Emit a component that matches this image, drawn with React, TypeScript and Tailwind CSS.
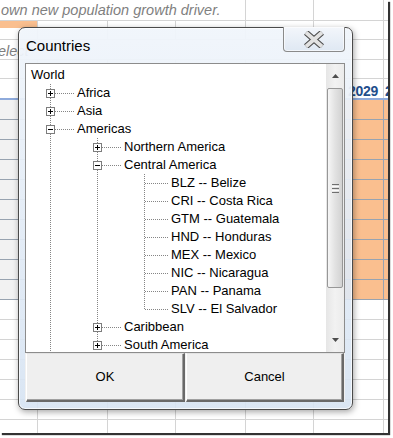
import React from 'react';

type Row = {
  label: string;
  level: number;
  box?: '+' | '-';
  next?: boolean;
  guides?: boolean[];
};

const rows: Row[] = [
  { label: 'World', level: 0 },
  { label: 'Africa', level: 1, box: '+', next: true, guides: [] },
  { label: 'Asia', level: 1, box: '+', next: true, guides: [] },
  { label: 'Americas', level: 1, box: '-', next: true, guides: [] },
  { label: 'Northern America', level: 2, box: '+', next: true, guides: [true] },
  { label: 'Central America', level: 2, box: '-', next: true, guides: [true] },
  { label: 'BLZ -- Belize', level: 3, next: true, guides: [true, true] },
  { label: 'CRI -- Costa Rica', level: 3, next: true, guides: [true, true] },
  { label: 'GTM -- Guatemala', level: 3, next: true, guides: [true, true] },
  { label: 'HND -- Honduras', level: 3, next: true, guides: [true, true] },
  { label: 'MEX -- Mexico', level: 3, next: true, guides: [true, true] },
  { label: 'NIC -- Nicaragua', level: 3, next: true, guides: [true, true] },
  { label: 'PAN -- Panama', level: 3, next: true, guides: [true, true] },
  { label: 'SLV -- El Salvador', level: 3, next: false, guides: [true, true] },
  { label: 'Caribbean', level: 2, box: '+', next: true, guides: [true] },
  { label: 'South America', level: 2, box: '+', next: false, guides: [true] },
];

const DOT = '#858585';

// vertical dotted line passing through an ancestor level
const Guide = ({ on }: { on: boolean }) => (
  <svg width="47" height="18" className="shrink-0" shapeRendering="crispEdges">
    {on && <line x1="23.5" y1="0" x2="23.5" y2="18" stroke={DOT} strokeDasharray="1 1" />}
  </svg>
);

// connector: elbow line plus the expand box
const Connector = ({ box, next }: { box?: '+' | '-'; next?: boolean }) => (
  <svg width="50" height="18" className="shrink-0" shapeRendering="crispEdges">
    <line x1="23.5" y1="0" x2="23.5" y2={box ? 5 : 9} stroke={DOT} strokeDasharray="1 1" />
    {next && <line x1="23.5" y1={box ? 14 : 10} x2="23.5" y2="18" stroke={DOT} strokeDasharray="1 1" />}
    <line x1={box ? 28 : 24} y1="9.5" x2="47" y2="9.5" stroke={DOT} strokeDasharray="1 1" />
    {box && (
      <>
        <rect x="19.5" y="5.5" width="8" height="8" fill="#fff" stroke="#7d7d7d" />
        <line x1="21" y1="9.5" x2="26" y2="9.5" stroke="#000" />
        {box === '+' && <line x1="23.5" y1="7" x2="23.5" y2="12" stroke="#000" />}
      </>
    )}
  </svg>
);

const TreeRow = ({ row }: { row: Row }) => {
  if (row.level === 0) {
    return <div className="h-[18px] leading-[18px] pl-[5px]">{row.label}</div>;
  }
  return (
    <div className="flex h-[18px] pl-px">
      {row.guides?.map((g, i) => <Guide key={i} on={g} />)}
      <Connector box={row.box} next={row.next} />
      <span className="leading-[18px] whitespace-nowrap">{row.label}</span>
    </div>
  );
};

const Scrollbar = () => (
  <div className="w-[18px] shrink-0 flex flex-col bg-linear-to-r from-[#e6e6e6] via-[#f2f2f2] to-[#ebebeb]">
    <div className="h-[24px] flex items-center justify-center">
      <svg width="7" height="4"><polygon points="3.5,0 7,4 0,4" fill="#4d4d4d" /></svg>
    </div>
    <div className="h-[200px] mx-px rounded-[2px] border border-[#979797] bg-linear-to-r from-[#f6f6f6] via-[#e2e2e2] to-[#d2d2d2] flex items-center justify-center">
      <div className="flex flex-col gap-[1px]">
        <div className="w-[7px] h-px bg-[#6f6f6f]" />
        <div className="w-[7px] h-px bg-[#fafafa]" />
        <div className="w-[7px] h-px bg-[#6f6f6f]" />
        <div className="w-[7px] h-px bg-[#fafafa]" />
        <div className="w-[7px] h-px bg-[#6f6f6f]" />
      </div>
    </div>
    <div className="flex-1" />
    <div className="h-[24px] flex items-center justify-center">
      <svg width="7" height="4"><polygon points="0,0 7,0 3.5,4" fill="#4d4d4d" /></svg>
    </div>
  </div>
);

const CloseGlyph = () => (
  <svg width="22" height="17" viewBox="0 0 22 17">
    <path d="M3 1.5 L19 15.5 M19 1.5 L3 15.5" stroke="#4a4a4a" strokeWidth="6" />
    <path d="M3 1.5 L19 15.5 M19 1.5 L3 15.5" stroke="#e2e2e2" strokeWidth="3.8" />
  </svg>
);

const cols = ['w-[38px]', 'w-[70px]', 'w-[68px]', 'w-[70px]', 'w-[68px]', 'w-[70px]'];

const SheetRow = ({ h, fill, line, bottom }: { h: string; fill?: (i: number) => string; line?: string; bottom?: string }) => (
  <div className={`flex ${h} ${bottom ?? 'border-b border-[#d4d4d4]'}`}>
    {cols.map((w, i) => (
      <div key={i} className={`${w} shrink-0 border-r ${line ?? 'border-[#d4d4d4]'} ${fill ? fill(i) : ''}`} />
    ))}
    <div className={`flex-1 ${fill ? fill(6) : ''}`} />
  </div>
);

const Sheet = () => (
  <div className="w-[388px] h-[433px] overflow-hidden bg-white shadow-[2px_2px_1px_rgba(0,0,0,0.8)] font-['Liberation_Sans',Arial,sans-serif]">
    {/* row 1: overflowing note text */}
    <div className="flex h-[21px] border-b border-[#d4d4d4]">
      <div className="w-[246px] shrink-0 border-r border-[#d4d4d4] italic text-[14.5px] leading-[20px] text-[#7f7f7f] whitespace-nowrap pl-px">
        own new population growth driver.
      </div>
      <div className="w-[68px] shrink-0 border-r border-[#d4d4d4]" />
      <div className="w-[70px] shrink-0 border-r border-[#d4d4d4]" />
      <div className="flex-1" />
    </div>
    <div className="flex h-[19px] border-b border-[#d4d4d4]">
      <div className="w-[38px] shrink-0 border-r border-[#d4d4d4]">
        <div className="h-[7px] bg-[#fabf8f]" />
      </div>
      {cols.slice(1).map((w, i) => (
        <div key={i} className={`${w} shrink-0 border-r border-[#d4d4d4]`} />
      ))}
    </div>
    <div className="flex h-[20px] border-b border-[#d4d4d4]">
      <div className="italic text-[14.5px] leading-[22px] text-[#7f7f7f] whitespace-nowrap -ml-[2px]">elect</div>
      <div className="flex-1" />
      <div className="w-[5px] border-l border-[#d4d4d4]" />
    </div>
    <SheetRow h="h-[19px]" />
    {/* header row */}
    <div className="flex h-[21px] border-b-2 border-[#8eaadb]">
      {cols.map((w, i) => (
        <div
          key={i}
          className={`${w} shrink-0 border-r border-[#d4d4d4] font-bold text-[14px] leading-[24px] text-[#1f4e8c] text-right pr-[5px] tracking-[-0.3px] overflow-hidden`}
        >
          {i === 5 ? '2029' : ''}
        </div>
      ))}
      <div className="flex-1 font-bold text-[14px] leading-[24px] text-[#1f4e8c] pl-px overflow-hidden">2</div>
    </div>
    {Array.from({ length: 10 }).map((_, r) => (
      <SheetRow
        key={r}
        h="h-[20px]"
        line="border-[#98a3b0]"
        bottom="border-b border-[#98a3b0]"
        fill={(i) => (i === 0 ? 'bg-[#f2f2f2]' : 'bg-[#fabf8f]')}
      />
    ))}
    {Array.from({ length: 7 }).map((_, r) => (
      <SheetRow key={r} h="h-[20px]" />
    ))}
  </div>
);

const Dialog = () => (
  <div className="absolute left-[18px] top-[27px] w-[335px] h-[383px] rounded-[7px] border border-[#4a4a4a] bg-linear-to-b from-[rgba(240,245,251,0.95)] to-[rgba(214,227,242,0.9)] shadow-[1px_2px_6px_rgba(0,0,0,0.35),inset_0_0_0_1px_rgba(255,255,255,0.7)] flex flex-col font-['Liberation_Sans',Arial,sans-serif] text-black">
    {/* caption */}
    <div className="h-[35px] flex justify-between pl-[7px] pr-[7px]">
      <div className="pt-[10px] text-[15px] leading-[15px]">Countries</div>
      <div className="-mt-px w-[62px] h-[25px] rounded-b-[4px] border border-t-0 border-[#8a8a8a] bg-linear-to-b from-[#f3f6fb] to-[#dfe8f3] shadow-[inset_0_0_0_1px_rgba(255,255,255,0.6)] flex items-center justify-center">
        <CloseGlyph />
      </div>
    </div>
    {/* client */}
    <div className="mx-[6px] w-[320px] bg-[#f0f0f0]">
      <div className="h-[290px] flex border border-[#8c8c8c] shadow-[inset_1px_1px_0_#a0a0a0]">
        <div className="flex-1 bg-white overflow-hidden pt-[2px] text-[13px]">
          {rows.map((r, i) => (
            <TreeRow key={i} row={r} />
          ))}
        </div>
        <Scrollbar />
      </div>
      <div className="flex gap-px px-px h-[49px] text-[13px]">
        <div className="w-[159px] flex items-center justify-center bg-[#efefef] border-t border-l border-t-[#e3e3e3] border-l-white border-r-2 border-b-2 border-r-[#696969] border-b-[#696969] shadow-[inset_-1px_-1px_0_#a0a0a0]">
          OK
        </div>
        <div className="w-[158px] flex items-center justify-center bg-[#efefef] border-t border-l border-t-[#e3e3e3] border-l-white border-r-2 border-b-2 border-r-[#696969] border-b-[#696969] shadow-[inset_-1px_-1px_0_#a0a0a0]">
          Cancel
        </div>
      </div>
    </div>
  </div>
);

export default function App() {
  return (
    <div className="relative w-[393px] h-[438px] bg-white overflow-hidden">
      <Sheet />
      <Dialog />
    </div>
  );
}
